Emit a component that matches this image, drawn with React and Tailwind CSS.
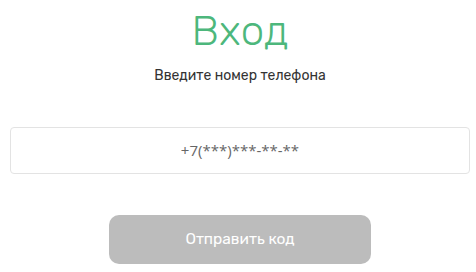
export default function App() {
  return (
    <div className="w-[476px] h-[272px] bg-white flex flex-col items-center pl-[4px] font-['Rubik','Inter',sans-serif]">
      <h1 className="mt-[7px] text-[42px] leading-[48px] font-light text-[#4db77c]">Вход</h1>
      <p className="mt-[12px] text-[14px] leading-[18px] text-[#333]">Введите номер телефона</p>
      <div className="mt-[42px] w-[460px] h-[47px] border border-[#e3e3e3] rounded-[4px] flex items-center justify-center">
        <span className="font-['Open_Sans',sans-serif] text-[15px] text-[#666]">+7(***)***-**-**</span>
      </div>
      <button className="mt-[41px] w-[262px] h-[49px] rounded-[10px] bg-[#bcbcbc] text-white text-[15.5px]">
        Отправить код
      </button>
    </div>
  )
}
